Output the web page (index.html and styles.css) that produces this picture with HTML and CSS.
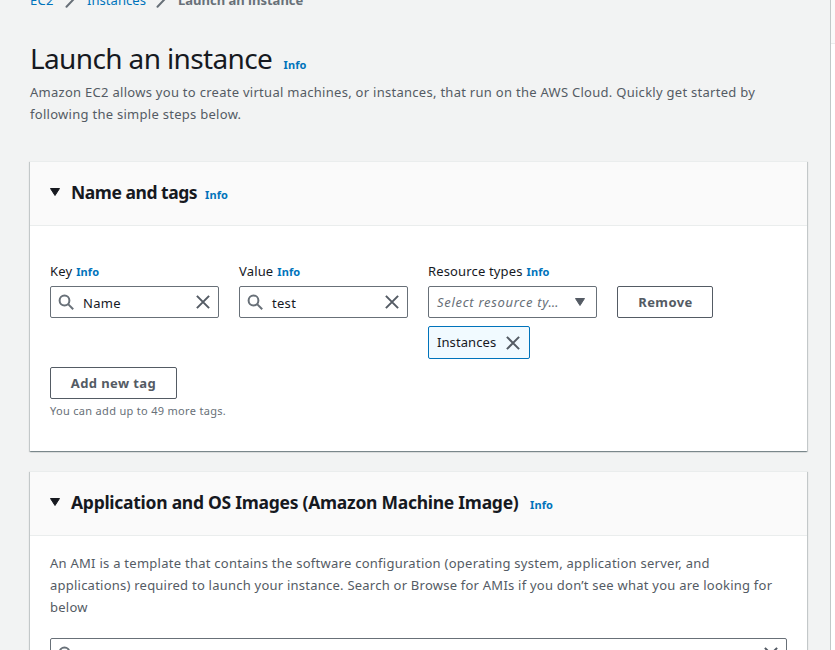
FILE: index.html
```html
<!DOCTYPE html>
<html lang="en">
<head>
<meta charset="utf-8">
<title>Launch an instance</title>
<link rel="stylesheet" href="styles.css">
</head>
<body>
<svg class="sprite" aria-hidden="true">
  <symbol id="search" viewBox="0 0 16 16"><circle cx="6.5" cy="6.5" r="4.9"/><path d="M10.1 10.1 15.2 15.200"/></symbol>
  <symbol id="close" viewBox="0 0 16 16"><path d="M1.9 1.9 14.1 14.1M14.1 1.9 1.9 14.1"/></symbol>
  <symbol id="caret" viewBox="0 0 12 10"><path d="M1.5 1.500H10.500L6 8.500Z"/></symbol>
</svg>
<div class="page">
  <main class="content">
    <nav class="crumbs">
      <a class="crumb-ec2">EC2</a>
      <svg class="slash" viewBox="0 0 12 16"><path d="M1.500 13.700 10.500 4.300"/></svg>
      <a class="crumb-instances">Instances</a>
      <svg class="slash" viewBox="0 0 12 16"><path d="M1.500 13.700 10.500 4.300"/></svg>
      <span class="current">Launch an instance</span>
    </nav>
    <header class="intro">
      <h1><span class="title">Launch an instance</span><a class="info">Info</a></h1>
      <p class="text"><span class="l1">Amazon EC2 allows you to create virtual machines, or instances, that run on the AWS Cloud. Quickly get started by</span><br><span class="l1">following the simple steps below.</span></p>
    </header>
    <section class="card tags">
      <div class="card-head"><svg class="caret"><use href="#caret"/></svg><h2 class="h-name">Name and tags</h2><a class="info">Info</a></div>
      <div class="card-body">
        <div class="fields">
          <div class="field">
            <label><span>Key</span><a class="info">Info</a></label>
            <div class="input"><svg class="icon search"><use href="#search"/></svg><span class="val">Name</span><svg class="icon close"><use href="#close"/></svg></div>
          </div>
          <div class="field">
            <label><span>Value</span><a class="info">Info</a></label>
            <div class="input"><svg class="icon search"><use href="#search"/></svg><span class="val">test</span><svg class="icon close"><use href="#close"/></svg></div>
          </div>
          <div class="field">
            <label><span>Resource types</span><a class="info">Info</a></label>
            <div class="input select"><span class="placeholder">Select resource ty…</span><svg class="caret"><use href="#caret"/></svg></div>
            <div class="token"><span>Instances</span><svg class="icon close"><use href="#close"/></svg></div>
          </div>
          <button class="btn remove">Remove</button>
        </div>
        <button class="btn add">Add new tag</button>
        <p class="hint">You can add up to 49 more tags.</p>
      </div>
    </section>
    <section class="card ami">
      <div class="card-head"><svg class="caret"><use href="#caret"/></svg><h2 class="h-ami">Application and OS Images (Amazon Machine Image)</h2><a class="info">Info</a></div>
      <div class="card-body">
        <p class="text"><span class="l3">An AMI is a template that contains the software configuration (operating system, application server, and</span><br><span class="l4">applications) required to launch your instance. Search or Browse for AMIs if you don’t see what you are looking for</span><br><span class="l4">below</span></p>
        <div class="input wide"><svg class="icon search"><use href="#search"/></svg><span class="val"></span><svg class="icon close"><use href="#close"/></svg></div>
      </div>
    </section>
  </main>
  <aside class="side"><div class="side-head"></div></aside>
</div>
</body>
</html>
```
FILE: styles.css
```css
* { box-sizing: border-box; }
body { margin: 0; height: 650px; overflow: hidden; background: #f2f3f3; color: #16191f; font: 13px/22px "Noto Sans", sans-serif; }
h1, h2, p { margin: 0; }
.sprite { display: none; }
.page { display: flex; height: 650px; }
.content { width: 830px; height: 650px; overflow: hidden; padding: 0 23px 0 30px; flex: none; }
.side { flex: 1; border-left: 1px solid #c0c8c8; background: #fff; }
.side-head { height: 44px; background: #fafafa; border-bottom: 1px solid #eaeded; }
.crumbs { display: flex; height: 22px; margin-top: -11px; color: #687078; white-space: nowrap; }
.crumbs a { color: #0073bb; }
.crumb-ec2 { width: 25px; letter-spacing: .3px; }
.crumb-instances { width: 59px; letter-spacing: .05px; }
.slash { width: 12px; height: 16px; margin: 4px 10px; flex: none; fill: none; stroke: #687078; stroke-width: 2; stroke-linecap: round; }
.current { font-weight: 700; }
.info { color: #0073bb; font-size: 11px; font-weight: 700; line-height: 16px; letter-spacing: .1px; }
.intro { padding-top: 29px; height: 150px; white-space: nowrap; }
h1 { display: flex; align-items: baseline; font-size: 28px; line-height: 36px; font-weight: 400; }
.title { width: 253.5px; letter-spacing: -.63px; }
.intro .text { margin-top: 5px; }
.text { color: #545b64; white-space: nowrap; }
.l1 { letter-spacing: .278px; }
.l3 { letter-spacing: .26px; }
.l4 { letter-spacing: .232px; }
.card { width: 777px; background: #fff; box-shadow: 0 1px 1px #001c244d, 1px 1px 1px #001c2426, -1px 1px 1px #001c2426; border-top: 1px solid #eaeded; }
.card-head { display: flex; align-items: baseline; height: 64px; padding: 17px 20px 0; background: #fafafa; border-bottom: 1px solid #eaeded; white-space: nowrap; }
.caret { width: 12px; height: 10px; fill: #16191f; stroke: #16191f; stroke-width: 1; stroke-linejoin: round; flex: none; }
.card-head .caret { align-self: flex-start; margin: 8px 10px 0 -1px; }
h2 { font-size: 17.5px; line-height: 26px; font-weight: 700; }
.h-name { width: 134px; letter-spacing: -.46px; }
.h-ami { width: 459px; letter-spacing: -.27px; }
.tags { height: 290px; margin-bottom: 20px; }
.card-body { padding: 0 20px; }
.fields { display: flex; gap: 20px; height: 107px; margin-top: 34px; }
.field { width: 169px; }
label { display: flex; align-items: baseline; gap: 4px; height: 26px; white-space: nowrap; letter-spacing: .15px; }
.input { display: flex; align-items: center; height: 32px; padding: 0 7px; border: 1px solid #687078; border-radius: 2px; background: #fff; }
.icon { width: 16px; height: 16px; flex: none; fill: none; stroke: #687078; stroke-width: 2; }
.close { stroke: #545b64; }
.val { flex: 1; padding: 2px 0 0 9px; letter-spacing: .3px; }
.select { padding: 0 10px 0 8px; justify-content: space-between; }
.placeholder { color: #687078; font-style: italic; white-space: nowrap; letter-spacing: .7px; }
.select .caret { fill: #545b64; stroke: #545b64; }
.token { display: flex; align-items: center; justify-content: space-between; width: 102px; height: 33px; margin-top: 8px; padding: 0 8px; border: 1px solid #0073bb; border-radius: 2px; background: #f1faff; }
.token span { margin-top: -2px; letter-spacing: .08px; }
.btn { height: 32px; padding: 0; border: 1px solid #545b64; border-radius: 2px; background: #fff; color: #545b64; font: 700 13px/20px "Noto Sans", sans-serif; white-space: nowrap; letter-spacing: .4px; }
.remove { width: 96px; margin-top: 26px; padding-left: 1px; }
.add { display: block; width: 127px; }
.hint { margin-top: 4px; font-size: 11px; line-height: 16px; color: #687078; letter-spacing: .31px; }
.ami { height: 200px; }
.ami .card-body { padding-top: 16px; }
.wide { margin-top: 20px; }
```
